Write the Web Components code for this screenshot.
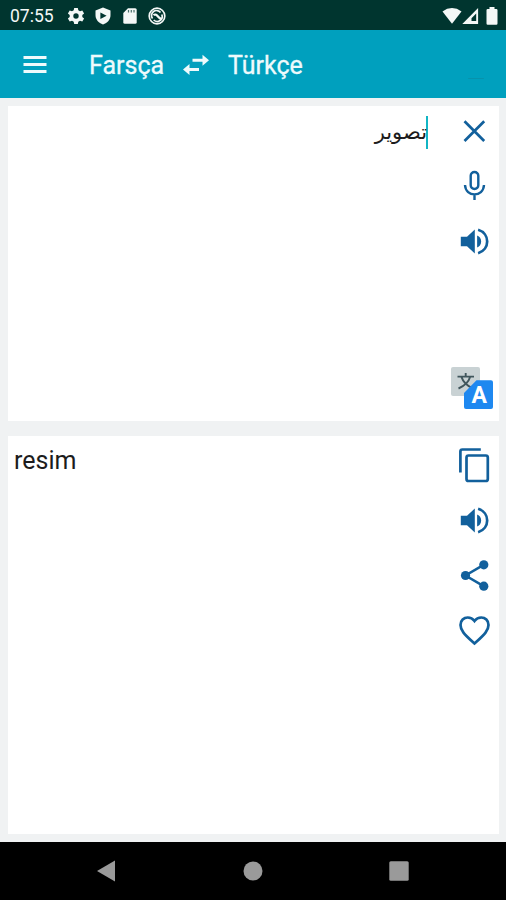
<!DOCTYPE html>
<html lang="tr">
<head>
<meta charset="utf-8">
<title>Farsça - Türkçe</title>
<style>
  body {
    margin: 0;
    font-family: Roboto, "Liberation Sans", sans-serif;
  }
</style>
</head>
<body>
<translator-app></translator-app>

<script>
// width, height and markup for every icon; the origin is the icon's centre
const ICONS = {
  gear: [18, 18, `<path fill-rule="evenodd" fill="currentColor" d="M-1.8-8h3.6l.5 2.3 1.7 1 2.3-.8 1.8 3.1-1.8 1.5v1.8l1.8 1.5-1.8 3.1-2.3-.8-1.7 1-.5 2.3h-3.6l-.5-2.3-1.7-1-2.3.8-1.8-3.1 1.8-1.5v-1.8l-1.8-1.5 1.8-3.1 2.3.8 1.7-1zM0-2.7a2.7 2.7 0 1 0 0 5.4a2.7 2.7 0 1 0 0-5.4z"/>`],
  shield: [18, 18, `<path fill="currentColor" d="M0-8.5 7.5-5.5V-1C7.5 3.5 4.5 7 0 8.5-4.5 7-7.5 3.5-7.5-1v-4.5z"/><path fill="#00352f" d="M-2.6-3.6 3.6-.3-2.6 3z"/>`],
  sdcard: [16, 18, `<path fill="currentColor" d="M-2-7.8H5.2a1.500 1.500 0 0 1 1.500 1.500V6.300a1.500 1.500 0 0 1-1.500 1.500H-5.200a1.500 1.500 0 0 1-1.500-1.500V-3z"/><path stroke="#00352f" stroke-opacity=".7" stroke-width="1.200" d="M-1.500-6v2.500M1.300-6v2.500M4-6v2.500"/>`],
  blocked: [20, 20, `<g fill="none" stroke="currentColor"><circle r="7.800" stroke-width="1.700"/><path stroke-width="1.700" d="M-4.500 2.500A5 5 0 0 1 3.500-3.500M-3.300 4A5 5 0 0 0 4.800-1.500"/><path stroke-width="2.200" d="M-3.500-.8Q-1.500-2.500.500 0T4.500 3"/></g>`],
  wifi: [20, 18, `<path fill="currentColor" d="M0 7.800-9.500-4.500Q-5-7.900 0-7.900T9.500-4.500z"/>`],
  signal: [17, 18, `<path fill="currentColor" fill-rule="evenodd" d="M7.600-8V8H-8.200zM5.700-2.500 1 2.200V5H5.700z"/>`],
  battery: [14, 20, `<path fill="currentColor" d="M-2.500-9h5v2h1.800A1.200 1.200 0 0 1 5.500-5.800V7.500A1.200 1.200 0 0 1 4.300 8.700H-4.300A1.200 1.200 0 0 1-5.500 7.500V-5.800A1.200 1.200 0 0 1-4.300-7h1.800z"/>`],
  menu: [24, 20, `<path stroke="currentColor" stroke-width="3" d="M-11.500-7.500h23M-11.500-.5h23M-11.500 6.500h23"/>`],
  swap: [28, 22, `<path fill="currentColor" d="M-3.500-6.300H6.500v-4l6.500 5.500L6.500.700V-3.300H-3.500zM3 3.100H-6.500V-.900L-13 4.600l6.500 5.500V6.100H3z"/>`],
  close: [40, 40, `<path stroke="currentColor" stroke-width="2.700" d="M-9.500-9.700 10.200 10M10.200-9.700-9.500 10"/>`],
  mic: [40, 40, `<g transform="translate(.5)" fill="none" stroke="currentColor" stroke-width="2.400"><rect x="-3.800" y="-14" width="7.600" height="17" rx="3.800"/><path d="M-9.500-1C-9 11.500 9 11.500 9.500-1M0 8.500V14"/></g>`],
  speaker: [40, 40, `<g transform="translate(.5 .5)"><path fill="currentColor" d="M-13.700-4.800H-7.500L.3-12V12L-7.500 4.800H-13.700z"/><path fill="currentColor" d="M2.600-6A6.500 6.500 0 0 1 2.600 6z"/><path fill="none" stroke="currentColor" stroke-width="2.700" d="M3.600-11.700C15.700-8 15.700 8 3.600 11.700"/></g>`],
  translate: [44, 44, `<rect x="-21" y="-21" width="29" height="29" rx="2" fill="#c9d2d4"/><path fill="none" stroke="#40565c" stroke-width="1.900" d="M-14.500-11.400H2M-6.300-15v3.600M-10.700-11.400Q-8-3.500 1 .500M-1.700-11.400Q-4-3.500-13.500.500"/><path fill="#1e88f0" d="M4.500-7.700H19a2 2 0 0 1 2 2V19a2 2 0 0 1-2 2H-6a2 2 0 0 1-2-2V5z"/>`],
  copy: [40, 40, `<g transform="translate(.3)" fill="none" stroke="currentColor" stroke-width="2.700"><path d="M-13.900 7.500V-13.500a2 2 0 0 1 2-2H6.500"/><rect x="-7.800" y="-9.500" width="21.300" height="25.500" rx="2"/></g>`],
  share: [40, 40, `<g transform="translate(.5 .5)"><path fill="none" stroke="currentColor" stroke-width="2.500" d="M9.500-10.800-9 0 9.500 10.800"/><g fill="currentColor"><circle cx="9.300" cy="-10.700" r="4.600"/><circle cx="-9" cy="0" r="4.600"/><circle cx="9.300" cy="10.700" r="4.600"/></g></g>`],
  heart: [40, 40, `<path transform="translate(.5 .5)" fill="none" stroke="currentColor" stroke-width="2.700" d="M0 13-2.200 11C-10 4-14-.200-14-5.600-14-10-10.700-13-6.800-13-4.200-13-1.600-11.700 0-9.500 1.600-11.700 4.200-13 6.800-13 10.700-13 14-10 14-5.600 14-.200 10 4 2.200 11z"/>`],
  back: [24, 24, `<path fill="currentColor" d="M9-10.500V10.500L-9 0z"/>`],
  home: [24, 24, `<circle r="9.500" fill="currentColor"/>`],
  recent: [24, 24, `<rect x="-9.700" y="-9.700" width="19.400" height="19.400" rx="1.500" fill="currentColor"/>`],
};

class UiIcon extends HTMLElement {
  connectedCallback() {
    const [w, h, shape] = ICONS[this.getAttribute('name')];
    this.attachShadow({ mode: 'open' }).innerHTML = `
      <style>
        :host { display: block; flex: none; }
        svg { display: block; }
      </style>
      <svg width="${w}" height="${h}" viewBox="${-w / 2} ${-h / 2} ${w} ${h}">${shape}</svg>
    `;
  }
}

class StatusBar extends HTMLElement {
  connectedCallback() {
    this.attachShadow({ mode: 'open' }).innerHTML = `
      <style>
        :host {
          display: flex;
          align-items: center;
          box-sizing: border-box;
          height: 30px;
          padding: 1px 7px 0 10px;
          background: #00352f;
          color: #f4f8f7;
          font-size: 17.5px;
        }
        .left, .right { display: flex; align-items: center; }
        .left { gap: 9.5px; margin-left: 13px; }
        .right { margin-left: auto; }
        .battery { margin-left: 6px; }
      </style>
      <span>07:55</span>
      <div class="left">
        <ui-icon name="gear"></ui-icon>
        <ui-icon name="shield"></ui-icon>
        <ui-icon name="sdcard"></ui-icon>
        <ui-icon name="blocked"></ui-icon>
      </div>
      <div class="right">
        <ui-icon name="wifi"></ui-icon>
        <ui-icon name="signal"></ui-icon>
        <ui-icon class="battery" name="battery"></ui-icon>
      </div>
    `;
  }
}

class LanguageBar extends HTMLElement {
  connectedCallback() {
    this.attachShadow({ mode: 'open' }).innerHTML = `
      <style>
        :host {
          display: flex;
          align-items: center;
          box-sizing: border-box;
          height: 68px;
          padding: 2px 22px 0 23px;
          background: #00a0be;
          color: #eefafc;
          font-size: 25px;
          -webkit-text-stroke: .3px;
        }
        .from { width: 74px; margin-left: 42px; }
        .swap { margin: 0 18px 0 19px; }
        .mark {
          width: 16px;
          height: 1px;
          margin: 26px 0 0 auto;
          border-radius: 1px;
          background: #0792ac;
        }
      </style>
      <ui-icon name="menu"></ui-icon>
      <span class="from"><slot name="from"></slot></span>
      <ui-icon class="swap" name="swap"></ui-icon>
      <span><slot name="to"></slot></span>
      <span class="mark"></span>
    `;
  }
}

class TextCard extends HTMLElement {
  connectedCallback() {
    this.attachShadow({ mode: 'open' }).innerHTML = `
      <style>
        :host {
          display: flex;
          justify-content: space-between;
          box-sizing: border-box;
          background: #fff;
          color: #1c1c1c;
          font-size: 25px;
        }
        .text { flex: 1; padding: 10px 0 0 6px; line-height: 30px; }
        .actions {
          display: flex;
          flex-direction: column;
          align-items: center;
          gap: 15px;
          width: 50px;
          padding: var(--actions-top, 5px) 0 11px;
          color: #12609c;
        }
      </style>
      <div class="text"><slot></slot></div>
      <div class="actions"><slot name="action"></slot></div>
    `;
  }
}

class TextInput extends HTMLElement {
  connectedCallback() {
    this.attachShadow({ mode: 'open' }).innerHTML = `
      <style>
        :host {
          display: flex;
          direction: rtl;
          padding-right: 21px;
          font-family: "DejaVu Sans", sans-serif;
          font-size: 21px;
        }
        .value {
          border-right: 2px solid #12b5c4;
          height: 33px;
          line-height: 32px;
        }
        /* the caret touches the first letter */
        slot { display: block; margin-right: -1px; }
      </style>
      <div class="value"><slot></slot></div>
    `;
  }
}

// the letter sits on top of the blue tile
class TranslateButton extends HTMLElement {
  connectedCallback() {
    this.attachShadow({ mode: 'open' }).innerHTML = `
      <style>
        :host { display: block; position: relative; left: -2px; margin-top: auto; }
        b {
          position: absolute;
          right: 7px;
          bottom: 1px;
          color: #fff;
          font: 700 23px/26px Roboto, sans-serif;
        }
      </style>
      <ui-icon name="translate"></ui-icon>
      <b>A</b>
    `;
  }
}

class NavBar extends HTMLElement {
  connectedCallback() {
    this.attachShadow({ mode: 'open' }).innerHTML = `
      <style>
        :host {
          display: flex;
          align-items: center;
          justify-content: space-between;
          box-sizing: border-box;
          height: 58px;
          padding: 0 95px 0 94px;
          background: #000;
          color: #9a9a9a;
        }
      </style>
      <ui-icon name="back"></ui-icon>
      <ui-icon name="home"></ui-icon>
      <ui-icon name="recent"></ui-icon>
    `;
  }
}

class TranslatorApp extends HTMLElement {
  connectedCallback() {
    this.attachShadow({ mode: 'open' }).innerHTML = `
      <style>
        :host {
          display: flex;
          flex-direction: column;
          height: 900px;
          background: #f0f2f3;
        }
        main {
          flex: 1;
          display: grid;
          grid-template-rows: 315px 1fr;
          gap: 15px;
          padding: 8px 7px 8px 8px;
        }
        .result { --actions-top: 9px; }
      </style>
      <status-bar></status-bar>
      <language-bar>
        <span slot="from">Farsça</span>
        <span slot="to">Türkçe</span>
      </language-bar>
      <main>
        <text-card>
          <text-input lang="fa">تصویر</text-input>
          <ui-icon slot="action" name="close"></ui-icon>
          <ui-icon slot="action" name="mic"></ui-icon>
          <ui-icon slot="action" name="speaker"></ui-icon>
          <translate-button slot="action"></translate-button>
        </text-card>
        <text-card class="result">
          resim
          <ui-icon slot="action" name="copy"></ui-icon>
          <ui-icon slot="action" name="speaker"></ui-icon>
          <ui-icon slot="action" name="share"></ui-icon>
          <ui-icon slot="action" name="heart"></ui-icon>
        </text-card>
      </main>
      <nav-bar></nav-bar>
    `;
  }
}

customElements.define('ui-icon', UiIcon);
customElements.define('status-bar', StatusBar);
customElements.define('language-bar', LanguageBar);
customElements.define('text-input', TextInput);
customElements.define('translate-button', TranslateButton);
customElements.define('text-card', TextCard);
customElements.define('nav-bar', NavBar);
customElements.define('translator-app', TranslatorApp);
</script>
</body>
</html>
